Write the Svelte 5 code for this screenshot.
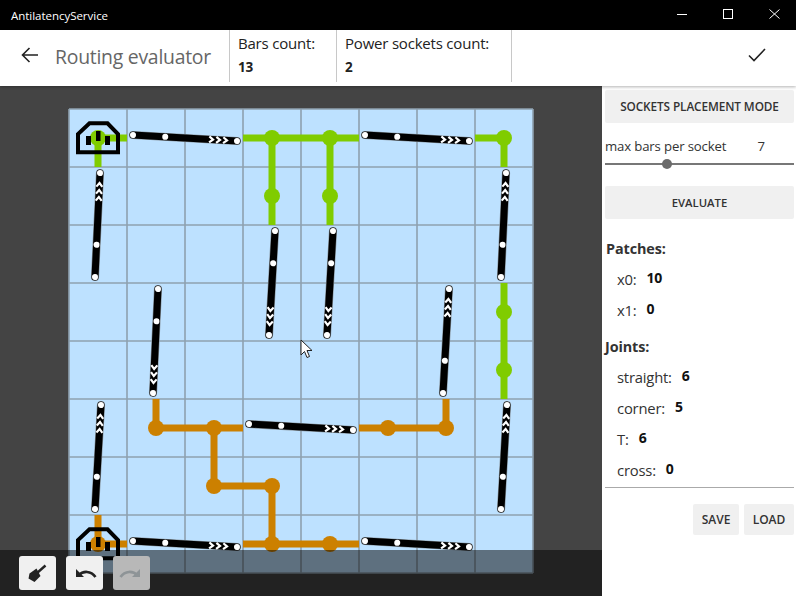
<script>
  const cell = 58;
  const gridLines = Array.from({ length: 9 }, (_, i) => i);
  const bars = [
    [133, 135, 237, 141], [365, 135, 469, 141], [249, 424, 353, 430],
    [133, 541, 237, 547], [365, 541, 469, 547],
    [95, 277, 100, 173], [501, 277, 506, 173],
    [275, 231, 269, 335], [333, 231, 327, 335], [158, 289, 153, 393],
    [443, 393, 449, 289], [95, 509, 101, 405], [501, 509, 507, 405]
  ].map(([x1, y1, x2, y2]) => ({
    x1, y1,
    len: Math.hypot(x2 - x1, y2 - y1),
    angle: (Math.atan2(y2 - y1, x2 - x1) * 180) / Math.PI
  }));
  const green = {
    wires: ['M98 167V138H127', 'M243 138H359', 'M272 138V225', 'M330 138V225', 'M475 138H504V167', 'M504 283V399'],
    nodes: [[98, 138], [272, 138], [330, 138], [504, 138], [272, 196], [330, 196], [504, 312], [504, 370]]
  };
  const orange = {
    wires: ['M98 515V544H127', 'M156 399V428H243', 'M214 428V486H272V544', 'M243 544H359', 'M359 428H446V399'],
    nodes: [[98, 544], [156, 428], [214, 428], [214, 486], [272, 486], [272, 544], [330, 544], [388, 428], [446, 428]]
  };
  const sockets = [0, 406];
  const patches = [['x0:', 10], ['x1:', 0]];
  const joints = [['straight:', 6], ['corner:', 5], ['T:', 6], ['cross:', 0]];
</script>

<div class="app">
  <div class="titlebar">
    <span class="apptitle">AntilatencyService</span>
    <svg class="winbtns" width="120" height="30" viewBox="0 0 120 30" fill="none" stroke="#fff" stroke-width="1">
      <path d="M1 14.5H11" />
      <rect x="47.5" y="9.5" width="9" height="9" />
      <path d="M93.5 9.5L103.5 18.5M103.5 9.5L93.5 18.5" />
    </svg>
  </div>

  <header>
    <svg class="back" width="18" height="16" viewBox="0 0 18 16" fill="none" stroke="#222" stroke-width="1.6">
      <path d="M1.5 8H17M8.5 1L1.5 8L8.5 15" />
    </svg>
    <h1>Routing evaluator</h1>
    <div class="stat first"><span>Bars count:</span><b>13</b></div>
    <div class="stat second"><span>Power sockets count:</span><b>2</b></div>
    <div class="end"></div>
    <svg class="check" width="20" height="16" viewBox="0 0 20 16" fill="none" stroke="#222" stroke-width="1.6">
      <path d="M2 8.5L7 13.5L18 2" />
    </svg>
  </header>

  <main>
    <section class="canvas">
      <svg class="board" width="464" height="464" viewBox="69 109 464 464">
        <rect x="69" y="109" width="464" height="464" fill="#bde1ff" />
        {#each gridLines as i}
          <path class="grid" d="M{69 + i * cell} 109V573M69 {109 + i * cell}H533" />
        {/each}

        {#each [[green, '#80cc00'], [orange, '#cc8000']] as [net, colour]}
          <g fill="none" stroke={colour} stroke-width="7">
            {#each net.wires as d}<path {d} />{/each}
          </g>
          <g fill={colour}>
            {#each net.nodes as [cx, cy]}<circle {cx} {cy} r="8" />{/each}
          </g>
        {/each}

        {#each sockets as dy}
          <g transform="translate(0 {dy})">
            <path class="socket" d="M78 152.3V134L89.5 123.3H107.5L118 134V152.3Z" />
            <rect x="86" y="136" width="5" height="9" />
            <rect x="96" y="131" width="4.5" height="10" />
            <rect x="105" y="136" width="5" height="9" />
          </g>
        {/each}

        {#each bars as bar}
          <g transform="translate({bar.x1} {bar.y1}) rotate({bar.angle})">
            <path class="halo" d="M0 0H{bar.len}" />
            <path class="bar" d="M0 0H{bar.len}" />
            {#each [11, 18, 25] as d}
              <path class="chev" d="M{bar.len - d - 2.8} -3L{bar.len - d + 1} 0L{bar.len - d - 2.8} 3" />
            {/each}
            <circle cx="0" cy="0" r="3" fill="#fff" />
            <circle cx={bar.len * 0.31} cy="0" r="3" fill="#fff" />
            <circle cx={bar.len} cy="0" r="3" fill="#fff" />
          </g>
        {/each}

        <path class="cursor" d="M301 340V355L304.5 351.5L307 357.5L309.5 356.5L307 350.5H312Z" />
      </svg>

      <div class="toolbar">
        <button aria-label="clear">
          <svg width="37" height="34" viewBox="0 0 37 34">
            <path d="M26.5 9.5L18 17" stroke="#222" stroke-width="2.4" />
            <path d="M10.5 17.5L17.5 12.5L21.5 20L15.5 26L9.5 22.5Z" fill="#222" />
          </svg>
        </button>
        <button aria-label="undo">
          <svg width="37" height="34" viewBox="0 0 37 34">
            <path d="M12.5 19.5C17 14.5 25 14.5 29.5 21" fill="none" stroke="#222" stroke-width="2.6" />
            <path d="M10 13V21H18Z" fill="#222" />
          </svg>
        </button>
        <button class="off" aria-label="redo">
          <svg width="37" height="34" viewBox="0 0 37 34">
            <path d="M24.5 19.5C20 14.5 12 14.5 7.5 21" fill="none" stroke="#8e9497" stroke-width="2.6" />
            <path d="M27 13V21H19Z" fill="#8e9497" />
          </svg>
        </button>
      </div>
    </section>

    <aside>
      <div class="btn mode">SOCKETS PLACEMENT MODE</div>
      <div class="maxrow"><span>max bars per socket</span><span class="seven">7</span></div>
      <div class="slider"><i></i></div>
      <div class="btn eval">EVALUATE</div>
      <h2>Patches:</h2>
      {#each patches as [name, value]}
        <div class="row"><span>{name}</span><b>{value}</b></div>
      {/each}
      <h2 class="joints">Joints:</h2>
      {#each joints as [name, value]}
        <div class="row"><span>{name}</span><b>{value}</b></div>
      {/each}
      <hr />
      <div class="actions">
        <div class="btn save">SAVE</div>
        <div class="btn load">LOAD</div>
      </div>
    </aside>
  </main>
</div>

<style>
  :global(body) { margin: 0; }
  .app {
    width: 796px; height: 596px; overflow: hidden;
    display: flex; flex-direction: column;
    font-family: "Open Sans", "Noto Sans", sans-serif;
    color: #222; background: #fff;
  }
  .titlebar {
    height: 30px; flex: none; background: #000; color: #fff;
    display: flex; align-items: center; justify-content: space-between;
  }
  .apptitle { margin-left: 11px; font-size: 11.5px; letter-spacing: -0.03px; }
  header {
    height: 56px; flex: none; display: flex; align-items: flex-start;
    position: relative; z-index: 2; background: #fff;
    box-shadow: 0 1px 3px rgba(0, 0, 0, .3);
  }
  .back { margin: 17px 0 0 21px; flex: none; }
  h1 {
    margin: 12px 0 0 16px; width: 174px; flex: none;
    font-size: 19.4px; line-height: 30px; font-weight: 400; color: #666; letter-spacing: -0.25px;
    white-space: nowrap;
  }
  .stat {
    height: 52px; box-sizing: border-box; flex: none;
    border-left: 1px solid #c8c8c8; padding: 3px 0 0 8px;
    display: flex; flex-direction: column; font-size: 15px; letter-spacing: -0.2px;
  }
  .stat span { line-height: 21px; }
  .stat b { line-height: 20px; margin-top: 3px; font-size: 13.5px; }
  .first { width: 107px; }
  .second { width: 175px; }
  .end { width: 235px; height: 52px; flex: none; border-left: 1px solid #c8c8c8; }
  .check { margin-top: 17px; flex: none; }
  main { flex: 1; display: flex; min-height: 0; }
  .canvas {
    width: 602px; flex: none; position: relative; overflow: hidden; background: #444;
  }
  .board { display: block; margin: 23px 0 0 69px; overflow: visible; }
  .grid { stroke: #8ea1b0; stroke-width: 1.6; fill: none; }
  .socket { fill: none; stroke: #000; stroke-width: 4; }
  .halo { stroke: #8a97a1; stroke-width: 8.2; stroke-linecap: round; fill: none; }
  .bar { stroke: #000; stroke-width: 7; stroke-linecap: round; fill: none; }
  .chev { stroke: #fff; stroke-width: 2.2; fill: none; }
  .cursor { fill: #fff; stroke: #222; stroke-width: 1; }
  .toolbar {
    position: absolute; left: 0; right: 0; bottom: 0; height: 46px; box-sizing: border-box;
    background: rgba(0, 0, 0, .5);
    display: flex; gap: 10px; padding: 6px 0 0 19px;
  }
  .toolbar button {
    width: 37px; height: 34px; padding: 0; border: 0; border-radius: 3px; background: #f0f0f0;
    display: block;
  }
  .toolbar button svg { display: block; }
  .toolbar button.off { background: #b8b8b8; }
  aside {
    flex: 1; min-width: 0; box-sizing: border-box; padding: 4px 2px 0 3px;
    background: #fff; font-size: 14px; color: #333;
    display: flex; flex-direction: column;
  }
  .btn {
    background: #f0f0f0; border-radius: 2px; text-align: center; font-weight: 600; color: #333;
    font-size: 11.3px; height: 33px; line-height: 33px;
  }
  .mode { font-size: 11.8px; letter-spacing: -0.1px; }
  .maxrow { display: flex; margin-top: 13px; line-height: 20px; font-size: 13.2px; letter-spacing: -0.15px; height: 20px; }
  .seven { margin-left: 31px; }
  .slider { height: 2px; margin-top: 7px; background: #777; position: relative; }
  .slider i {
    position: absolute; left: 56.5px; top: -4.5px; width: 10px; height: 10px; border-radius: 50%; background: #6b6b6b;
  }
  .eval { margin-top: 21px; line-height: 34px; }
  h2 { margin: 19px 0 0 1px; font-size: 14.4px; line-height: 22px; font-weight: 700; color: #333; letter-spacing: -0.1px; }
  h2.joints { margin: 15px 0 0 0; }
  .row { display: flex; margin: 9px 0 0 12px; line-height: 22px; height: 22px; font-size: 14.8px; letter-spacing: -0.2px; }
  h2 + .row { margin-top: 8px; }
  .row b { margin: -1px 0 0 10px; font-size: 14px; color: #111; }
  hr { width: 100%; margin: 6px 0 0; border: 0; height: 1px; background: #aaa; flex: none; }
  .actions { display: flex; justify-content: flex-end; gap: 5px; margin-top: 16px; }
  .save { width: 46px; height: 31px; line-height: 32px; font-size: 12px; }
  .load { width: 50px; height: 31px; line-height: 32px; font-size: 12px; }
</style>
